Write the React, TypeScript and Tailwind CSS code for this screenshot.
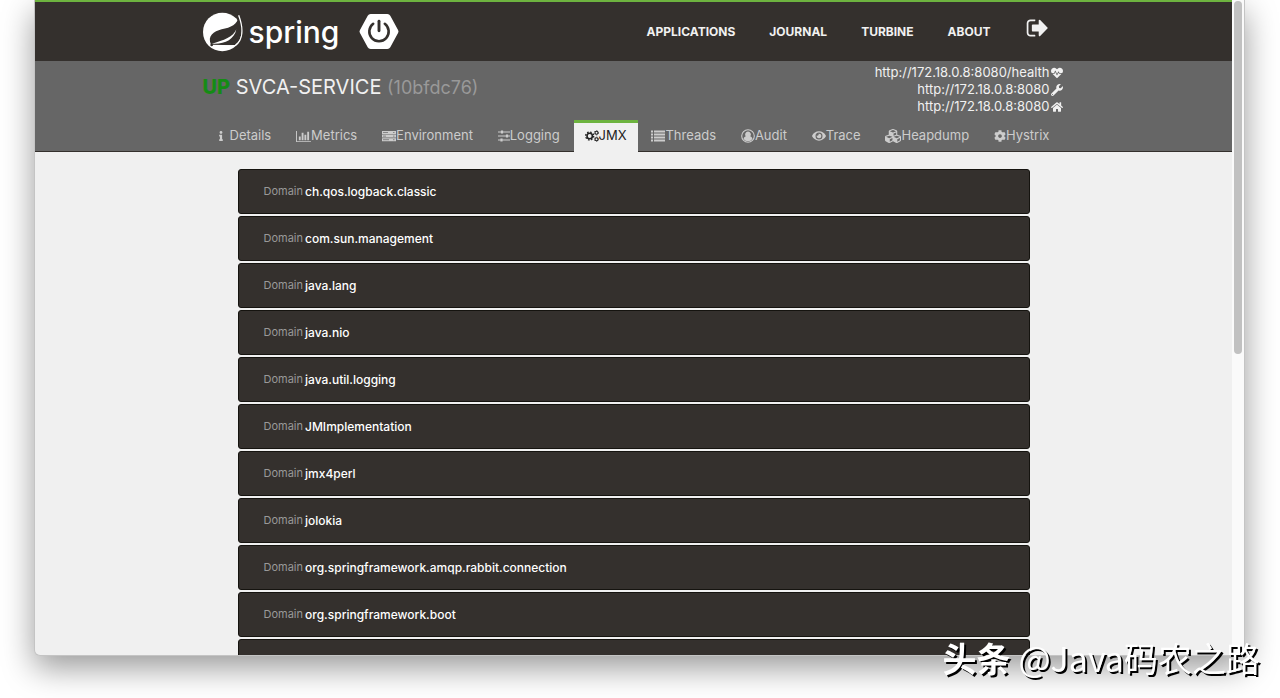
import type { ReactNode } from 'react';
import { FaCog, FaCubes, FaEye, FaHeartbeat, FaHome, FaInfo, FaWrench } from 'react-icons/fa';

const SpringLeaf = () => (
  <svg viewBox="0 0 120 120" className="size-10" aria-hidden="true">
    <circle cx="58" cy="60" r="58" fill="#fff" />
    <path d="M107 10 C104 40 84 46 56 52 C32 58 12 72 24 98 L98 100 C120 82 120 40 107 10Z" fill="#34302d" />
    <path d="M100 52 C92 74 62 86 26 95 C62 98 94 84 100 52Z" fill="#fff" />
    <path d="M107 10 C122 50 120 84 97 100 C76 105 50 101 30 102" fill="none" stroke="#fff" strokeWidth="4" />
    <circle cx="26" cy="99" r="4" fill="#34302d" />
  </svg>
);

const BootBadge = () => (
  <svg viewBox="0 0 124 112" className="h-[37px] w-10" aria-hidden="true">
    <path d="M36 2 H88 Q94 2 97 7 L121 51 Q124 56 121 61 L97 105 Q94 110 88 110 H36 Q30 110 27 105 L3 61 Q0 56 3 51 L27 7 Q30 2 36 2Z" fill="#fff" />
    <path d="M44 32 A30 30 0 1 0 80 32" fill="none" stroke="#34302d" strokeWidth="8" strokeLinecap="round" />
    <path d="M62 24 V54" stroke="#34302d" strokeWidth="9" strokeLinecap="round" />
  </svg>
);

const SignOutIcon = () => (
  <svg viewBox="0 0 1664 1792" className="size-6" fill="currentColor" aria-hidden="true">
    <path d="M704 1440q0 4 1 20t.5 26.5-3 23.5-10 19.5-20.5 6.5h-320q-119 0-203.5-84.5t-84.5-203.5v-704q0-119 84.5-203.5t203.5-84.5h320q13 0 22.5 9.5t9.5 22.5q0 4 1 20t.5 26.5-3 23.5-10 19.5-20.5 6.5h-320q-66 0-113 47t-47 113v704q0 66 47 113t113 47h312l11.5 1 11.5 3 8 5.5 7 9 2 13.5zm928-544q0 26-19 45l-544 544q-19 19-45 19t-45-19-19-45v-288h-448q-26 0-45-19t-19-45v-384q0-26 19-45t45-19h448v-288q0-26 19-45t45-19 45 19l544 544q19 19 19 45z" />
  </svg>
);

const BarChartIcon = () => (
  <svg viewBox="0 0 2048 1792" className="h-[13px] w-[15px]" fill="currentColor" aria-hidden="true">
    <path d="M640 896v512h-256v-512h256zm384-512v1024h-256v-1024h256zm1024 1152v128h-2048v-1536h128v1408h1920zm-640-896v768h-256v-768h256zm384-384v1152h-256v-1152h256z" />
  </svg>
);

const ServerIcon = () => (
  <svg viewBox="0 0 14 12" className="h-3 w-3.5" aria-hidden="true">
    <path d="M0 1h14v3H0zM0 4.600h14v3H0zM0 8.200h14v3H0z" fill="currentColor" />
    <path d="M1 2.500h5M1 6.100h3M1 9.700h6M11 2.500h1.500M11 6.100h1.500M11 9.700h1.500" stroke="#666" strokeWidth="0.7" />
  </svg>
);

const SlidersIcon = () => (
  <svg viewBox="0 0 12 12" className="size-3" stroke="currentColor" aria-hidden="true">
    <path d="M0 2h12M0 6h12M0 10h12" strokeWidth="1.2" />
    <path d="M4 0.5v3M9 4.5v3M3.5 8.5v3" strokeWidth="2.2" />
  </svg>
);

const CogsIcon = () => (
  <svg viewBox="0 0 14 12" className="h-3 w-3.5" fill="none" stroke="currentColor" aria-hidden="true">
    <circle cx="4.7" cy="6" r="2.7" strokeWidth="1.6" />
    <circle cx="4.7" cy="6" r="4" strokeWidth="1.3" strokeDasharray="1.6 1.54" />
    <circle cx="11.5" cy="2.800" r="1.500" strokeWidth="1.100" />
    <circle cx="11.5" cy="2.800" r="2.200" strokeWidth="0.700" strokeDasharray="1.100 1.200" />
    <circle cx="11.5" cy="9.200" r="1.500" strokeWidth="1.100" />
    <circle cx="11.5" cy="9.200" r="2.200" strokeWidth="0.700" strokeDasharray="1.100 1.200" />
  </svg>
);

const ListIcon = () => (
  <svg viewBox="0 0 14 12" className="h-3 w-3.5" stroke="currentColor" strokeWidth="1.9" aria-hidden="true">
    <path d="M0 1.5h2M0 4.5h2M0 7.5h2M0 10.5h2M3 1.5h11M3 4.5h11M3 7.5h11M3 10.5h11" />
  </svg>
);

const UserCircleIcon = () => (
  <svg viewBox="0 0 14 14" className="size-3.5" aria-hidden="true">
    <circle cx="7" cy="7" r="6.3" fill="none" stroke="currentColor" strokeWidth="1.1" />
    <path d="M7 2.6a2.8 2.8 0 0 1 2.2 4.6c1.3.4 2 1.3 2.2 2.8A5.3 5.3 0 0 1 2.6 10c.2-1.500.9-2.400 2.200-2.800A2.800 2.800 0 0 1 7 2.600z" fill="currentColor" />
  </svg>
);

const navLinks = ['Applications', 'Journal', 'Turbine', 'About'];

const serviceLinks = [
  { url: 'http://172.18.0.8:8080/health', icon: <FaHeartbeat /> },
  { url: 'http://172.18.0.8:8080', icon: <FaWrench /> },
  { url: 'http://172.18.0.8:8080', icon: <FaHome /> },
];

const tabs: { label: string; icon: ReactNode; active?: boolean }[] = [
  { label: 'Details', icon: <FaInfo className="mr-1 size-2.5" /> },
  { label: 'Metrics', icon: <BarChartIcon /> },
  { label: 'Environment', icon: <ServerIcon /> },
  { label: 'Logging', icon: <SlidersIcon /> },
  { label: 'JMX', icon: <CogsIcon />, active: true },
  { label: 'Threads', icon: <ListIcon /> },
  { label: 'Audit', icon: <UserCircleIcon /> },
  { label: 'Trace', icon: <FaEye className="size-3.5" /> },
  { label: 'Heapdump', icon: <FaCubes className="size-4" /> },
  { label: 'Hystrix', icon: <FaCog className="size-3" /> },
];

const domains = [
  'ch.qos.logback.classic',
  'com.sun.management',
  'java.lang',
  'java.nio',
  'java.util.logging',
  'JMImplementation',
  'jmx4perl',
  'jolokia',
  'org.springframework.amqp.rabbit.connection',
  'org.springframework.boot',
];

const Navbar = () => (
  <header className="border-t-2 border-[#6db33f] bg-[#34302d]">
    <div className="mx-auto flex h-[59px] max-w-[862px] items-center justify-between">
      <a href="#/" className="flex items-center text-white">
        <SpringLeaf />
        <span className="ml-1.5 text-[30px] leading-8 font-medium">spring</span>
        <span className="ml-5">
          <BootBadge />
        </span>
      </a>
      <nav className="flex items-center gap-[34px] pr-4 text-[12px] font-bold text-[#f1f1f1] uppercase">
        {navLinks.map((link) => (
          <a key={link} href={`#/${link.toLowerCase()}`}>
            {link}
          </a>
        ))}
        <button type="button" aria-label="Sign out" className="mb-2">
          <SignOutIcon />
        </button>
      </nav>
    </div>
  </header>
);

const ServiceHeader = () => (
  <section className="border-b border-[#34302d] bg-[#666]">
    <div className="mx-auto max-w-[862px]">
      <div className="flex h-[59px] justify-between">
        <h1 className="pt-3 text-[20px] leading-7 text-[#f1f1f1]">
          <span className="font-extrabold text-[#158c15]">UP</span> SVCA-SERVICE{' '}
          <span className="text-[18px] text-[#999]">(10bfdc76)</span>
        </h1>
        <ul className="pt-[3px] pr-0.5 text-right text-[13px] leading-[17px] text-[#f1f1f1]">
          {serviceLinks.map((link, i) => (
            <li key={i}>
              <a href={link.url} className="flex items-center justify-end gap-px">
                {link.url}
                <span className="text-[12px]">{link.icon}</span>
              </a>
            </li>
          ))}
        </ul>
      </div>
      <ul className="-mb-px flex justify-between pr-1 pl-0.5 text-[13px] text-[#ccc]">
        {tabs.map((tab) => (
          <li key={tab.label}>
            <a
              href={`#/${tab.label.toLowerCase()}`}
              className={
                tab.active
                  ? 'flex h-8 items-center border-t-3 border-[#6db33f] bg-[#f0f0f0] px-[11px] pb-[3px] text-[#222]'
                  : 'flex h-8 items-center border-t-3 border-transparent px-[11px] pb-[3px]'
              }
            >
              {tab.icon}
              {tab.label}
            </a>
          </li>
        ))}
      </ul>
    </div>
  </section>
);

const App = () => (
  <div className="h-screen overflow-hidden bg-white pr-[35px] pb-[42px] pl-[34px] font-['Inter',sans-serif]">
    <div className="flex h-full overflow-hidden rounded-b-md border-x border-b border-[#c4c4c4] bg-[#f0f0f0] shadow-[0_12px_32px_rgba(0,0,0,0.4)]">
      <div className="min-w-0 flex-1">
        <Navbar />
        <ServiceHeader />
        <main className="mx-auto max-w-[792px] pt-[17px]">
          <ul className="flex flex-col gap-0.5">
            {domains.map((domain) => (
              <li key={domain}>
                <button
                  type="button"
                  className="flex h-[45px] w-full items-center gap-0.5 rounded-[3px] border border-[#15130f] bg-[#34302d] px-[25px] text-left text-[12px] font-medium text-white"
                >
                  <span className="text-[11px] font-normal text-[#999]">Domain</span>
                  {domain}
                </button>
              </li>
            ))}
            <li className="h-[45px] rounded-[3px] border border-[#15130f] bg-[#34302d]" />
          </ul>
        </main>
      </div>
      <div className="w-3 bg-[#fafafa] px-0.5 pt-px">
        <div className="h-[54%] rounded-full bg-[#c1c1c1]" />
      </div>
    </div>
    <p className="fixed right-5 bottom-4 flex items-center gap-2 font-['Noto_Sans_CJK_SC',sans-serif] text-[34px] leading-[48px] whitespace-nowrap text-white [text-shadow:2px_2px_0_#000]">
      <strong className="font-bold">头条</strong>
      <span>@Java码农之路</span>
    </p>
  </div>
);

export default App;
